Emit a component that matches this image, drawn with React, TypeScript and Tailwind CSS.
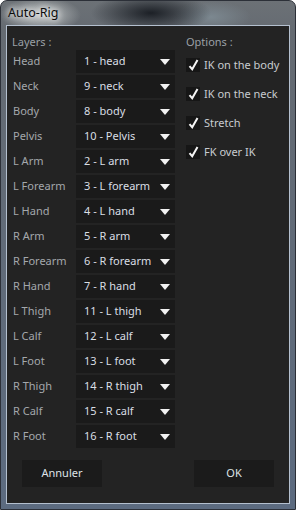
const layers = [
  ["Head", "1 - head"],
  ["Neck", "9 - neck"],
  ["Body", "8 - body"],
  ["Pelvis", "10 - Pelvis"],
  ["L Arm", "2 - L arm"],
  ["L Forearm", "3 - L forearm"],
  ["L Hand", "4 - L hand"],
  ["R Arm", "5 - R arm"],
  ["R Forearm", "6 - R forearm"],
  ["R Hand", "7 - R hand"],
  ["L Thigh", "11 - L thigh"],
  ["L Calf", "12 - L calf"],
  ["L Foot", "13 - L foot"],
  ["R Thigh", "14 - R thigh"],
  ["R Calf", "15 - R calf"],
  ["R Foot", "16 - R foot"],
];

const options = ["IK on the body", "IK on the neck", "Stretch", "FK over IK"];

const Arrow = () => (
  <svg width="10" height="6" viewBox="0 0 10 6" className="shrink-0">
    <path d="M0 0H10L5 6Z" fill="#f2f2f2" />
  </svg>
);

const Check = () => (
  <div className="flex h-[14px] w-[14px] shrink-0 items-center justify-center bg-[#161616]">
    <svg width="11" height="12" viewBox="0 0 11 12">
      <path
        d="M1.5 7.2L4.2 10.2L9.5 1"
        stroke="#f4f4f4"
        strokeWidth="2"
        fill="none"
      />
    </svg>
  </div>
);

export default function App() {
  return (
    <div className="h-[510px] w-[296px] font-['Noto_Sans',sans-serif] text-[11px]">
      <div className="flex h-full w-full flex-col rounded-t-[7px] border border-[#2c3038] bg-[radial-gradient(ellipse_40px_18px_at_40px_14px,#c4c8c8_0,transparent_100%),radial-gradient(ellipse_60px_20px_at_150px_12px,#1c2026_0,transparent_100%),radial-gradient(ellipse_40px_16px_at_210px_16px,#7c8890_0,transparent_100%),linear-gradient(180deg,#6c7176_0,#656b72_30px,#5c6b80_100%)] px-[5px] pb-[5px]">
        <div className="flex h-[24px] items-center pl-[2px] text-[12.5px] leading-none text-[#0c0c0c] [text-shadow:0_0_6px_#ffffff,0_0_10px_#ffffff]">
          Auto-Rig
        </div>
        <div className="flex-1 border border-[#b4c0cf] bg-[#232323]">
          <div className="flex h-full flex-col px-[5px] pt-[7px]">
            <div className="flex">
              <div className="w-[174px]">
                <div className="h-[17px] leading-[17px] text-[#9aa0a6]">Layers :</div>
                {layers.map(([label, value]) => (
                  <div key={label} className="mb-[2px] flex h-[23px] items-center">
                    <div className="w-[64px] pl-[1px] text-[#a4a8ac]">{label}</div>
                    <div className="flex h-[23px] w-[99px] items-center justify-between bg-[#1a1a1a] pl-[8px] pr-[5px] text-[#d9dee4]">
                      <span className="whitespace-nowrap">{value}</span>
                      <Arrow />
                    </div>
                  </div>
                ))}
              </div>
              <div className="flex-1">
                <div className="h-[17px] leading-[17px] text-[#9aa0a6]">Options :</div>
                <div className="flex flex-col gap-[15px] pt-[8px]">
                  {options.map((o) => (
                    <div key={o} className="flex h-[14px] items-center gap-[4px]">
                      <Check />
                      <span className="whitespace-nowrap text-[#c8ccd0]">{o}</span>
                    </div>
                  ))}
                </div>
              </div>
            </div>
            <div className="mt-[10px] flex justify-between px-[10px]">
              <button className="h-[27px] w-[80px] bg-[#1b1b1b] text-[#dfe3e8]">Annuler</button>
              <button className="h-[27px] w-[80px] bg-[#1b1b1b] text-[#dfe3e8]">OK</button>
            </div>
          </div>
        </div>
      </div>
    </div>
  );
}
